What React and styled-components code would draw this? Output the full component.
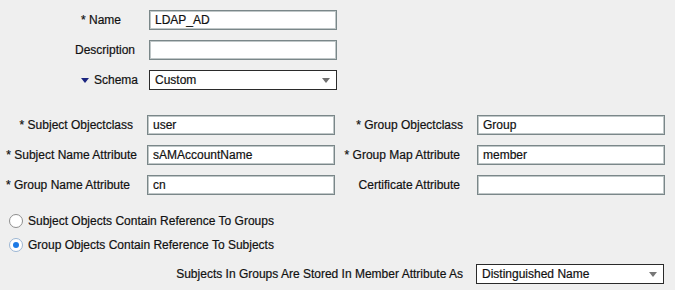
import React from 'react';
import styled, { createGlobalStyle } from 'styled-components';

const GlobalStyle = createGlobalStyle`
  html, body {
    margin: 0;
    padding: 0;
    background: #efefef;
  }
  body {
    font-family: "Liberation Sans", Arial, sans-serif;
    font-size: 12px;
    color: #111;
    -webkit-text-stroke: 0.2px #111;
  }
`;

const Page = styled.div`
  width: 675px;
  height: 290px;
  padding-top: 10px;
  box-sizing: border-box;
  overflow: hidden;
`;

const TopForm = styled.div`
  display: grid;
  grid-template-columns: 149px 188px;
  grid-template-rows: 20px 20px 20px;
  row-gap: 10px;
`;

const AttrGrid = styled.div`
  display: grid;
  grid-template-columns: 147px 188px 142px 188px;
  row-gap: 10px;
  margin-top: 25px;
`;

const Label = styled.label`
  display: flex;
  align-items: center;
  justify-content: flex-end;
  height: 20px;
  padding-right: ${p => p.$pr || 12}px;
  white-space: nowrap;
`;

const TextInput = styled.input`
  box-sizing: border-box;
  width: 188px;
  height: 20px;
  margin: 0;
  padding: 0 5px;
  border: 1px solid #7a8789;
  box-shadow: inset 0 0 0 1px #c0c7c8;
  background: #fff;
  font-family: "Liberation Sans", Arial, sans-serif;
  font-size: 12px;
  color: #111;
  -webkit-text-stroke: 0.2px #111;
  outline: none;
`;

const SelectBox = styled.div`
  box-sizing: border-box;
  width: 188px;
  height: 20px;
  display: flex;
  align-items: center;
  justify-content: space-between;
  padding: 0 6px 0 5px;
  border: 1px solid #2a2a2a;
  background: #fff;
  color: #111;
`;

const Caret = styled.span`
  width: 0;
  height: 0;
  border-left: 4px solid transparent;
  border-right: 4px solid transparent;
  border-top: 5px solid ${p => p.$color || '#777'};
`;

const SchemaCaret = styled(Caret)`
  margin-right: 5px;
`;

const Radios = styled.div`
  display: flex;
  flex-direction: column;
  gap: 8px;
  margin-top: 18px;
  padding-left: 9px;
`;

const RadioRow = styled.label`
  display: flex;
  align-items: center;
  gap: 5px;
  height: 16px;
`;

const RadioDot = styled.span`
  box-sizing: border-box;
  width: 14px;
  height: 14px;
  border-radius: 50%;
  border: 1px solid ${p => (p.$on ? '#9bb5d3' : '#8e8e8e')};
  background: #fff;
  display: flex;
  align-items: center;
  justify-content: center;

  &::after {
    content: '';
    display: ${p => (p.$on ? 'block' : 'none')};
    width: 6px;
    height: 6px;
    border-radius: 50%;
    background: #1c7ae6;
  }
`;

const StoredRow = styled.div`
  display: grid;
  grid-template-columns: 476px 188px;
  margin-top: 11px;
`;

const Select = ({ value, color }) => (
  <SelectBox>
    <span>{value}</span>
    <Caret $color={color} />
  </SelectBox>
);

const attrs = [
  ['* Subject Objectclass', 14, 'user', '* Group Objectclass', 14, 'Group'],
  ['* Subject Name Attribute', 10, 'sAMAccountName', '* Group Map Attribute', 17, 'member'],
  ['* Group Name Attribute', 17, 'cn', 'Certificate Attribute', 17, ''],
];

const App = () => (
  <Page>
    <GlobalStyle />
    <TopForm>
      <Label $pr={28}>* Name</Label>
      <TextInput defaultValue="LDAP_AD" />
      <Label $pr={14}>Description</Label>
      <TextInput defaultValue="" />
      <Label $pr={11}>
        <SchemaCaret $color="#1b2580" />
        Schema
      </Label>
      <Select value="Custom" color="#6f6f6f" />
    </TopForm>

    <AttrGrid>
      {attrs.map(([l1, p1, v1, l2, p2, v2]) => (
        <React.Fragment key={l1}>
          <Label $pr={p1}>{l1}</Label>
          <TextInput defaultValue={v1} />
          <Label $pr={p2}>{l2}</Label>
          <TextInput defaultValue={v2} />
        </React.Fragment>
      ))}
    </AttrGrid>

    <Radios>
      <RadioRow>
        <RadioDot />
        Subject Objects Contain Reference To Groups
      </RadioRow>
      <RadioRow>
        <RadioDot $on />
        Group Objects Contain Reference To Subjects
      </RadioRow>
    </Radios>

    <StoredRow>
      <Label $pr={13}>Subjects In Groups Are Stored In Member Attribute As</Label>
      <Select value="Distinguished Name" color="#777" />
    </StoredRow>
  </Page>
);

export default App;
